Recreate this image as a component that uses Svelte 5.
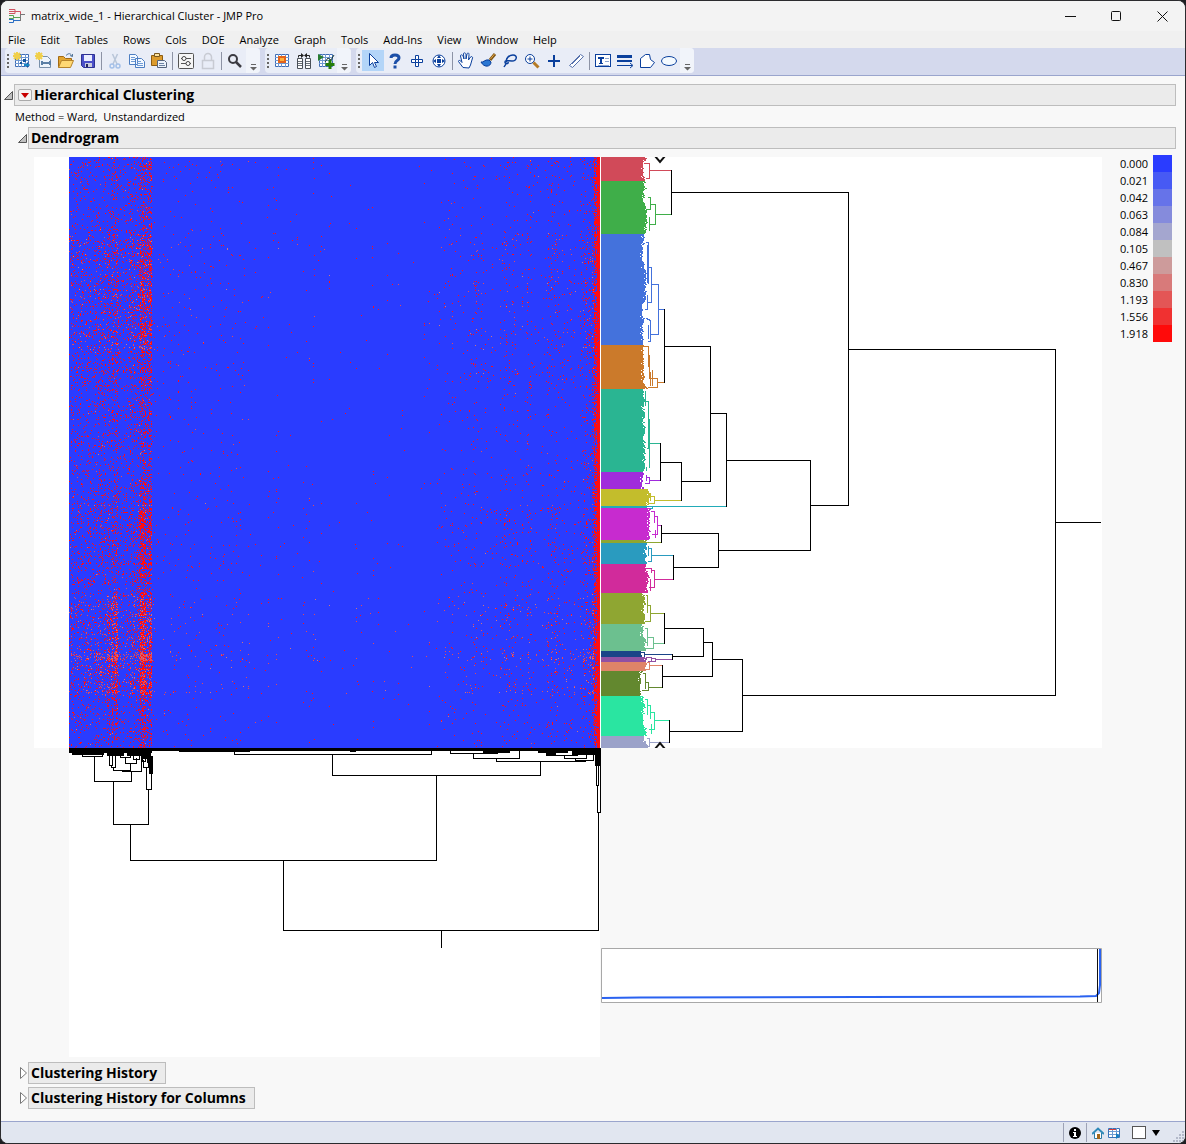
<script lang="ts">
  const menus = [
    "File", "Edit", "Tables", "Rows", "Cols", "DOE", "Analyze",
    "Graph", "Tools", "Add-Ins", "View", "Window", "Help",
  ];

  const toolbars = [
    ["new-table", "new-script", "open", "save", "|", "cut", "copy", "paste", "|", "prefs", "lock", "|", "search"],
    ["table", "columns", "add-graph"],
    ["arrow", "help", "move", "scroll", "|", "hand", "brush", "lasso", "zoom", "cross", "ruler", "|", "text", "line", "polygon", "oval"],
  ];

  const legend = [
    ["0.000", "#2a3cff"],
    ["0.021", "#475af4"],
    ["0.042", "#6673e9"],
    ["0.063", "#858bdc"],
    ["0.084", "#a4a6cf"],
    ["0.105", "#c0c0c0"],
    ["0.467", "#cd9b9b"],
    ["0.830", "#d87a7a"],
    ["1.193", "#e35656"],
    ["1.556", "#f03131"],
    ["1.918", "#ff0a0a"],
  ];

  // top, bottom and ragged edge of each row cluster, then its branches
  const clusters = [
    { color: "#d14a59", top: 157, bottom: 181, edge: 646, d: "M641 158H646M644 163H649V178H646M649 170H671" },
    { color: "#3fae49", top: 181, bottom: 234, edge: 646, d: "M648 197H650V209H648M650 204H655V224H649M649 217V230M655 214H671" },
    { color: "#4472dc", top: 234, bottom: 345, edge: 645, d: "M646 242H648V283M647 245V282M648 267H651V302H647M647 295V309H645M651 284H658V334H650M646 318L650 320V341H648M648 325V338M658 309H664" },
    { color: "#cb7a2b", top: 345, bottom: 389, edge: 646, d: "M640 346H648V366M649 355V378H657V387H648M650 372V385M652 370V385M657 382H664" },
    { color: "#2ab592", top: 389, bottom: 472, edge: 644, d: "M645 391V405M646 401H648V448M649 419V467M647 448H648M646 467V470M649 443H660" },
    { color: "#a02bdc", top: 472, bottom: 489, edge: 645, d: "M646 475V480M646 477H649V483H645M649 480H660" },
    { color: "#c3bd2c", top: 489, bottom: 506, edge: 649, d: "M648 493H650V500M650 496H654V503H648M654 500H681" },
    { color: "#22abb8", top: 506, bottom: 508, edge: 648, d: "M601 506H726M646 508H652V506" },
    { color: "#c72bcf", top: 508, bottom: 540, edge: 652, d: "M651 511H654V522M654 516H657V534H652M655 530V537M657 525H661" },
    { color: "#8ea631", top: 540, bottom: 543, edge: 647, d: "M601 542H661" },
    { color: "#2a9bbf", top: 543, bottom: 564, edge: 648, d: "M648 546V555M649 548H651V561H648M651 555H673" },
    { color: "#d12b9b", top: 564, bottom: 593, edge: 648, d: "M646 568H651V572M651 570H654V587H649M650 579V590M654 579H673" },
    { color: "#8fa632", top: 593, bottom: 624, edge: 644, d: "M646 595H647V612M648 605H650V621H645M650 613H664" },
    { color: "#6cc08f", top: 624, bottom: 651, edge: 645, d: "M645 628H647V645M647 637H653V648H646M653 643H664" },
    { color: "#1a4488", top: 651, bottom: 657, edge: 642, d: "M640 652H644V657H640M644 654H672" },
    { color: "#9150a3", top: 657, bottom: 662, edge: 649, d: "M648 657H651V660M651 658H655V661H648M655 659H672" },
    { color: "#df8468", top: 662, bottom: 671, edge: 647, d: "M647 662H649V669H645M649 665H662" },
    { color: "#63882f", top: 671, bottom: 696, edge: 643, d: "M643 673H645V688M645 682H648V690H642M648 687H662" },
    { color: "#2ae5a1", top: 696, bottom: 736, edge: 646, d: "M645 699H647V714M647 705H650V718M650 712H654V729H649M651 724V733M654 720H669" },
    { color: "#9ba2c9", top: 736, bottom: 748, edge: 647, d: "M647 738H649V746H646M649 742H669" },
  ];

  const rowTree =
    "M671 170V214M671 192H848M664 309V382M664 346H710M660 443V480M660 462H681M681 462V500M681 481H710" +
    "M710 346V481M710 413H726M726 413V506M726 460H810M661 525V542M661 533H718M673 555V579M673 567H718" +
    "M718 533V567M718 550H810M810 460V550M810 505H848M848 192V505M848 349H1055M664 613V643M664 628H703" +
    "M672 654V659M672 656H703M703 628V656M703 642H712M662 665V687M662 676H712M712 642V676M712 659H742" +
    "M669 720V742M669 731H742M742 659V731M742 695H1055M1055 349V695M1055 522H1102";

  const colTree =
    "M234 750V754H431V750M332 754V775H540V761M496 758V761H585M473 753V758H519V751M450 750V753H497" +
    "M546 752V755H577V752M564 755V758H586V752M575 758V760H593V752M596 764V785H598V764M597 785V812H600V750" +
    "M598 812V930M436 775V860M130 824V860H436M283 860V930H598M441 930V947M113 781V824H148V789" +
    "M94 757V781H131V771M82 754V756H102V753M122 771H141V755M130 763V771M113 767V770H130M111 765V767H115V756" +
    "M109 755V765H112V755M125 757V763H136V758M120 754V757H130V754M133 754V759H139V754M146 767V789H151V774" +
    "M143 760V767H148V758M142 753V761H145V754M147 758V762H149V752";

  const colMass =
    "M69 748H601V751H69ZM69 750H152V753H69ZM72 752H104V755H72ZM107 752H124V756H107ZM127 752H151V756H127Z" +
    "M142 756H152V759H142ZM149 756H153V774H149ZM179 750H250V752H179ZM350 750H356V752H350ZM483 750H510V753H483Z" +
    "M538 750H568V753H538ZM547 752H556V755H547ZM572 750H601V755H572ZM595 754H601V766H595Z";

  function seeded(seed: number) {
    let s = seed;
    return () => {
      s = (s + 0x6d2b79f5) | 0;
      let t = Math.imul(s ^ (s >>> 15), 1 | s);
      t = (t + Math.imul(t ^ (t >>> 7), 61 | t)) ^ t;
      return ((t ^ (t >>> 14)) >>> 0) / 4294967296;
    };
  }

  // how busy a column is, 69 to 600
  function colDensity(x: number, n: number) {
    if (x >= 597) return 0.97;
    if (x >= 594) return 0.6;
    if (x >= 592) return 0.22;
    if (x >= 583) return 0.08 * n + 0.02;
    if (x >= 500) return 0.004 + n * n * 0.07;
    if (x >= 440) return 0.002 + n * n * 0.04;
    if (x >= 250) return n > 0.9 ? 0.014 : 0.0015;
    if (x >= 152) return 0.002 + n * n * 0.022;
    if (x >= 149) return 0.45;
    if (x >= 140) return 0.2 + n * 0.25;
    if (x >= 128) return 0.08 + n * 0.1;
    if (x >= 107 && x < 118) return 0.1 + n * 0.18;
    return 0.05 + n * 0.1;
  }

  function rowFactor(y: number) {
    if (y < 181) return 0.8;
    if (y < 234) return 0.6;
    if (y < 345) return 1.15;
    if (y < 389) return 0.95;
    if (y < 472) return 0.65;
    if (y < 508) return 0.75;
    if (y < 565) return 1.1;
    if (y < 593) return 0.75;
    if (y < 696) return 1.3;
    return 0.7;
  }

  function buildHeat() {
    const rand = seeded(7);
    const noise: number[] = [];
    for (let x = 0; x < 531; x++) noise.push(rand());
    const paths = ["", "", ""];
    for (let y = 157; y < 748; y++) {
      const stripe = y === 505 || y === 349 || y === 347 || (y > 651 && y < 661) || y === 692;
      const pale = stripe ? 0.75 : y > 593 && y < 696 ? 0.35 : y > 233 && y < 350 ? 0.2 : 0.04;
      const jitter = 0.6 + rand() * 0.8;
      for (let x = 69; x < 600; x++) {
        let p = colDensity(x, noise[x - 69]);
        if (x < 594) p *= rowFactor(y) * jitter * (stripe ? 1.5 : 1);
        if (x > 106 && x < 118 && y > 593 && y < 740) p *= 1.8;
        if (x > 139 && x < 147 && y > 480) p *= 1.4;
        if (rand() > p) continue;
        const tone = rand() < pale && x < 594 ? (rand() < 0.2 ? 2 : 1) : 0;
        paths[tone] += `M${x} ${y}h1v1h-1z`;
      }
    }
    return paths;
  }

  // the leaves are too tight to tell apart, so they fill up to a wandering edge
  function buildEdge(top: number, bottom: number, edge: number) {
    const rand = seeded(top);
    let end = edge - 2;
    let d = "";
    for (let y = top; y < bottom; y++) {
      if (rand() < 0.5) end += rand() < 0.5 ? -1 : 1;
      end = Math.max(edge - 3, Math.min(edge + 1, end));
      if (rand() < 0.2) {
        d += `M601 ${y}H${end - 2}v1H601zM${end - 1} ${y}H${end + 1}v1H${end - 1}z`;
      } else {
        d += `M601 ${y}H${end}v1H601z`;
      }
    }
    return d;
  }

  const heat = buildHeat();
  const heatColors = ["#ff0e12", "#e64a58", "#d07480"];
</script>

{#snippet icon(name: string)}
  <svg width="18" height="18" viewBox="0 0 18 18" fill="none" stroke="#0a3f9c" aria-hidden="true">
    {#if name === "new-table" || name === "table" || name === "add-graph"}
      <path fill="#fff" stroke="#3f6db5" d="M2.5 2.5h13v12h-13z" />
      <path stroke="#6f98d2" d="M2 5.5h14M2 8.5h14M2 11.5h14M5.5 2v13M8.5 2v13M12.5 2v13" />
      {#if name === "new-table"}
        <path stroke="#f0cf4a" stroke-width="2" d="M4 0v8M0 4h8M1 1l6 6M7 1L1 7" />
        <path fill="#14559c" stroke="none" d="M10 7h3v3h-3zM7 10h2v2H7zM14 10l3 3-3 3z" />
        <path stroke="#1686c2" stroke-width="2" d="M11 13h5" />
      {:else if name === "table"}
        <path fill="#ffb13b" stroke="#e4631a" stroke-width="2" d="M6 5h6v5H6z" />
      {:else}
        <path stroke="#1d3d35" d="M8 10l3-4 3 2 3-5" />
        <path fill="#287d31" stroke="none" d="M1 2l6 3-6 4z" />
        <path stroke="#257d0a" stroke-width="3" d="M13 8v9M8.500 12.500h9" />
      {/if}
    {:else if name === "new-script"}
      <path fill="#eef4fb" stroke="#7890aa" d="M4.5 4.5h8l3 3v8h-11z" />
      <path stroke="#f0cf4a" stroke-width="2" d="M4 0v8M0 4h8M1 1l6 6M7 1L1 7" />
      <path stroke="#5b7fa5" stroke-width="2" d="M6 11h10M7 9v4M15 9v4" />
    {:else if name === "open"}
      <path fill="#e3a52f" stroke="#a36a14" d="M1.5 15.5v-11h5l2 2h6v3" />
      <path fill="#ffd873" stroke="#b5832a" d="M1.5 15.5l3-7h12l-3 7z" />
      <path stroke="#55779c" d="M9 3.5c3-3 5-2 6 1M13 3.5l2.5 1V2" />
    {:else if name === "save"}
      <path fill="#4b50c9" stroke="#2d3192" d="M2.5 2.5h13v13h-11l-2-2z" />
      <path fill="#e9edff" stroke="none" d="M5 3h8v6H5z" />
      <path fill="#c9ccdd" stroke="none" d="M6 11h7v4H6z" />
      <path fill="#26285f" stroke="none" d="M7 12h2v3H7z" />
    {:else if name === "cut"}
      <path stroke="#b9c6d8" stroke-width="1.5" d="M6.500 2l4.500 10M11.500 2L7 12" />
      <circle cx="6" cy="14" r="2" stroke="#a4c0e8" stroke-width="1.5" />
      <circle cx="12" cy="14" r="2" stroke="#a4c0e8" stroke-width="1.5" />
    {:else if name === "copy"}
      <path fill="#f4f9ff" stroke="#4d7ec2" d="M1.5 2.5h6l2 2v8h-8zM7.5 6.5h6l3 3v6h-9z" />
      <path stroke="#6f9bd6" d="M3 5.5h4M3 7.5h4M3 9.5h4M9 9.5h4M9 11.5h6M9 13.5h6" />
    {:else if name === "paste"}
      <path fill="#dc9b2c" stroke="#8d5d13" d="M1.5 3.5h11v10h-11z" />
      <path fill="#ffe39b" stroke="#79571f" d="M4.5 1.5h5v3h-5z" />
      <path fill="#edf3fb" stroke="#56647c" d="M7.5 8.5h7l2 2v5h-9z" />
      <path stroke="#6d83a3" d="M9 11.5h5M9 13.5h6" />
    {:else if name === "prefs"}
      <rect x="1.5" y="1.5" width="15" height="15" rx="1" fill="#f6f6f6" stroke="#555" />
      <path stroke="#555" d="M4 6.5h10M4 11.5h10" />
      <circle cx="7" cy="6.5" r="2" fill="#fff" stroke="#444" />
      <circle cx="11" cy="11.5" r="2" fill="#fff" stroke="#444" />
    {:else if name === "lock"}
      <path stroke="#c8cbd3" stroke-width="1.5" d="M3.5 8.5h11v8h-11zM5.5 8V5a3.5 3.5 0 0 1 7 0v3" />
    {:else if name === "search"}
      <circle cx="7" cy="7" r="4" stroke="#3b3b42" stroke-width="2" />
      <path stroke="#3b3b42" stroke-width="2.5" d="M10 10l5 5" />
    {:else if name === "columns"}
      <path fill="#fff" stroke="#4a5058" d="M2.5 6.5h5v10h-5zM10.5 6.5h5v10h-5z" />
      <path stroke="#6b737c" d="M3 9.5h4M3 11.5h4M3 13.5h4M11 9.5h4M11 11.5h4M11 13.5h4" />
      <path stroke="#222" d="M3.5 5.500v-2h3M14.500 5.500v-2h-3" />
      <path fill="#222" stroke="none" d="M6 1l3 2.500L6 6zM12 1L9 3.500 12 6z" />
    {:else if name === "arrow"}
      <path fill="#fff" d="M5.5 1.5v12l3-3 2 5 2-1-2-4h4z" />
    {:else if name === "help"}
      <path stroke="#1c4fa8" stroke-width="3" d="M5 6c0-4 8-4 8 0 0 3-4 2-4 6M9 13.5v3" />
    {:else if name === "move"}
      <path fill="#fff" d="M7.5 3.5h3v4h4v3h-4v4h-3v-4h-4v-3h4z" />
      <path d="M7.5 7.5h3v3h-3z" />
    {:else if name === "scroll"}
      <circle cx="9" cy="9" r="6" fill="#fff" />
      <path fill="#0a3f9c" stroke="none" d="M9 3l2 3H7zM9 15l2-3H7zM3 9l3-2v4zM15 9l-3-2v4zM7 7h4v4H7z" />
    {:else if name === "hand"}
      <path fill="#fff" d="M6 15.5L1.5 9.5c0-2 2-1 3.5 1L3.500 4c0-2 2-1 2.500 0l1 3-.5-5c0-2 2-1 2.500 0v5l1-5c1-2 2-1 2 1l-.5 5 2-3c1-1 2.500 0 2 1l-2 7-1.500 3z" />
    {:else if name === "brush"}
      <path stroke="#7d5618" stroke-width="3" d="M16 2l-5 6" />
      <path stroke="#e5a544" d="M15.500 2l-4 5" />
      <path fill="#2b77d3" d="M2 10c2 1 4-3 8-2l2 2c0 5-7 6-10 0z" />
    {:else if name === "lasso"}
      <path stroke-width="1.500" d="M6 10c-2-3 2-7 6-7 5 0 4 6-1 6-4 0-7-1-7 1s4 2 3 0M5 11c0 2-1 2-2 4" />
    {:else if name === "zoom"}
      <circle cx="7" cy="7" r="4.500" fill="#fff" />
      <path stroke="#b57b26" stroke-width="3" d="M10.500 10.500l5 5" />
      <path d="M4.500 7h5M7 4.500v5" />
    {:else if name === "cross"}
      <path stroke-width="2" d="M9 3v12M3 9h12" />
    {:else if name === "ruler"}
      <path fill="#fff" stroke="#5772ad" d="M2.500 13.500l11-11 3 2-11 11zM5 12l8-8" />
    {:else if name === "text"}
      <rect x="1.500" y="2.500" width="15" height="12" fill="#fff" />
      <path stroke-width="2" d="M4 6h6M7 6v6" />
      <path d="M5 11.500h4" />
      <path stroke="#8ba4cf" d="M11 6.500h4M11 9.500h4M4 13.500h11" />
    {:else if name === "line"}
      <path stroke-width="3" d="M1 4.500h15" />
      <path stroke-width="2" d="M1 9h15" />
      <path d="M1 13.500h15M14 11l3 2.500-3 2.500" />
    {:else if name === "polygon"}
      <path fill="#fff" d="M2.500 15.500v-9l5-4h4l1 5 4 3-4 5z" />
    {:else if name === "oval"}
      <ellipse cx="9" cy="9" rx="7.500" ry="4.500" fill="#f4faff" />
    {/if}
  </svg>
{/snippet}

<div class="window">
  <header class="titlebar">
    <svg class="logo" width="17" height="14" viewBox="0 0 17 14" fill="none" aria-hidden="true">
      <path stroke="#cf5361" d="M0 .5h6v4H0M0 2.500h6M6 2.500h5.500v3" />
      <path stroke="#5aa352" d="M0 6.500h4.500v3H0M4 8.500h7" />
      <path stroke="#2b6fc4" d="M0 10.500h4.500v3H0M4 11.500h7" />
      <path stroke="#777" d="M11.500 5v7M12 5.500h4" />
    </svg>
    <span class="title">matrix_wide_1 - Hierarchical Cluster - JMP Pro</span>
    <div class="controls">
      <button aria-label="Minimize"><svg width="11" height="11" stroke="#111" fill="none"><path d="M0 5.500h11" /></svg></button>
      <button aria-label="Maximize"><svg width="11" height="11" stroke="#111" fill="none"><rect x=".5" y=".5" width="9" height="9" rx="1" /></svg></button>
      <button aria-label="Close"><svg width="11" height="11" stroke="#111" fill="none"><path d="M.5.5l10 10M10.500.5l-10 10" /></svg></button>
    </div>
  </header>

  <nav class="menubar">
    {#each menus as menu}
      <button>{menu}</button>
    {/each}
  </nav>

  <div class="toolbars">
    {#each toolbars as tools}
      <div class="toolbar" role="toolbar">
        <span class="grip"></span>
        {#each tools as tool}
          {#if tool === "|"}
            <span class="sep"></span>
          {:else}
            <button class="tool" class:active={tool === "arrow"} aria-label={tool}>{@render icon(tool)}</button>
          {/if}
        {/each}
        <button class="overflow" aria-label="More tools">
          <svg width="7" height="7"><path fill="#666" d="M1 0h5v1H1zM0 3h7L3.500 6.500z" /></svg>
        </button>
      </div>
    {/each}
  </div>

  <main>
    <section class="outline">
      <button class="disclose" aria-label="Collapse Hierarchical Clustering">
        <svg width="9" height="9"><path fill="#c0c0c0" stroke="#555" d="M8.500 .5v8h-8z" /></svg>
      </button>
      <h1>
        <button class="hotspot" aria-label="Hierarchical Clustering options">
          <svg width="8" height="5"><path fill="#c80000" d="M0 0h8L4 5z" /></svg>
        </button>
        Hierarchical Clustering
      </h1>
    </section>
    <p class="method">Method = Ward,&nbsp; Unstandardized</p>

    <section class="outline nested">
      <button class="disclose" aria-label="Collapse Dendrogram">
        <svg width="9" height="9"><path fill="#c0c0c0" stroke="#555" d="M8.500 .5v8h-8z" /></svg>
      </button>
      <h2>Dendrogram</h2>
    </section>

    <div class="report">
      <div class="plots">
        <div class="row-plot">
          <svg width="1032" height="591" viewBox="69 157 1032 591" shape-rendering="crispEdges" role="img" aria-label="Heat map and row dendrogram">
            <rect x="69" y="157" width="531" height="591" fill="#2a3cff" />
            {#each heat as d, i}
              <path {d} fill={heatColors[i]} />
            {/each}
            {#each clusters as c}
              <path d={buildEdge(c.top, c.bottom, c.edge)} fill={c.color} />
              <path d={c.d} fill="none" stroke={c.color} stroke-linecap="square" transform="translate(.5 .5)" />
            {/each}
            <path d={rowTree} fill="none" stroke="#000" stroke-linecap="square" transform="translate(.5 .5)" />
            <path d="M655 156l5 6 5-6M655 749l5-6 5 6" fill="none" stroke="#111" stroke-width="2" shape-rendering="auto" />
          </svg>
        </div>
        <div class="col-plot">
          <svg class="col-tree" width="532" height="309" viewBox="69 748 532 309" shape-rendering="crispEdges" role="img" aria-label="Column dendrogram">
            <rect x="69" y="748" width="531" height="309" fill="#fff" />
            <path d={colMass} />
            <path d={colTree} fill="none" stroke="#000" stroke-linecap="square" transform="translate(.5 .5)" />
          </svg>
          <svg class="scree" width="501" height="55" viewBox="601 948 501 55" role="img" aria-label="Distance plot">
            <path d="M601.500 948.500h500v54h-500z" fill="#fff" stroke="#a8a8a8" />
            <path d="M602 998L640 997.500 860 997 1080 996.500 1096 996 1099 993 1100 985V949" fill="none" stroke="#2a62f0" stroke-width="2" />
            <path d="M1097.500 949v53" stroke="#111" />
          </svg>
        </div>
      </div>

      <table class="legend">
        <tbody>
          {#each legend as [value, color]}
            <tr>
              <td>{value}</td>
              <td class="swatch" style:background={color}></td>
            </tr>
          {/each}
        </tbody>
      </table>
    </div>

    {#each ["Clustering History", "Clustering History for Columns"] as label}
      <section class="outline nested closed">
        <button class="disclose" aria-label="Expand {label}">
          <svg width="9" height="12"><path fill="#fff" stroke="#777" d="M2.500 .5v11l6-5.500z" /></svg>
        </button>
        <h2>{label}</h2>
      </section>
    {/each}
  </main>

  <footer>
    <button class="cell" aria-label="Information">
      <svg width="12" height="12"><circle cx="6" cy="6" r="6" /><path fill="#fff" d="M5 2h2v2H5zM4 5h3v4h1v1H4V9h1V6H4z" /></svg>
    </button>
    <div class="cell links">
      <button aria-label="Home window">
        <svg width="12" height="12"><path fill="#fff" stroke="#2b7ba5" d="M2.500 6v5.500h7V6" /><path fill="none" stroke="#2d89b8" stroke-width="2" d="M0 7l6-5.500L12 7" /><path fill="#a36618" d="M5 7h3v5H5z" /></svg>
      </button>
      <button aria-label="Data table">
        <svg width="12" height="12"><path fill="#fff" stroke="#3a74b8" d="M.5 1.500h11v9H.5z" /><path stroke="#6c9bd2" d="M1 4.500h10M1 7.500h10M4.500 1v9M8.500 1v9" /><path stroke="#d33c3c" d="M1 2.500h7" /><path fill="#1a7fc0" d="M8 6l4 3-4 3z" /></svg>
      </button>
      <input type="checkbox" aria-label="Select window" />
      <button aria-label="Window list">
        <svg width="8" height="6"><path d="M0 0h8L4 6z" /></svg>
      </button>
    </div>
    <svg class="size-grip" width="12" height="12" fill="#b3b9c9" aria-hidden="true">
      <path d="M9 0h2v2H9zM6 3h2v2H6zM9 3h2v2H9zM3 6h2v2H3zM6 6h2v2H6zM9 6h2v2H9zM0 9h2v2H0zM3 9h2v2H3zM6 9h2v2H6zM9 9h2v2H9z" />
    </svg>
  </footer>
</div>

<style>
  :global(body) {
    background: #1e1e22;
  }

  .window {
    box-sizing: border-box;
    display: flex;
    flex-direction: column;
    min-height: 100vh;
    overflow: hidden;
    border: 1px solid #2b2b2e;
    border-radius: 8px;
    background: #f8f8f8;
    color: #000;
    font: 11px/16px "Open Sans", "Noto Sans", sans-serif;
  }

  button {
    display: flex;
    align-items: center;
    justify-content: center;
    margin: 0;
    padding: 0;
    border: 0;
    background: none;
    color: inherit;
    font: inherit;
  }

  svg {
    display: block;
    flex-shrink: 0;
  }

  .titlebar {
    display: flex;
    align-items: center;
    height: 30px;
    padding-left: 8px;
    background: #f3f3f3;
  }

  .title {
    margin-left: 5px;
  }

  .controls {
    display: flex;
    align-self: stretch;
    margin-left: auto;
  }

  .controls button {
    width: 46px;
  }

  .menubar {
    display: flex;
    height: 17px;
    background: #f0f0f0;
  }

  .menubar button {
    padding: 0 8px 0 7px;
  }

  .toolbars {
    display: flex;
    gap: 5px;
    height: 27px;
    padding: 0 4px;
    border-bottom: 1px solid #9aa5cd;
    background: #d4d9ed;
  }

  .toolbar {
    display: flex;
    align-items: center;
    height: 25px;
    border-radius: 4px;
    background: #e9edf7;
  }

  .grip {
    width: 2px;
    height: 14px;
    margin: 0 2px;
    background: repeating-linear-gradient(#666 0 2px, transparent 2px 4px);
  }

  .tool {
    width: 22px;
    height: 21px;
  }

  .tool.active {
    background: #b3d5f8;
  }

  .sep {
    width: 1px;
    height: 18px;
    margin: 0 2px;
    background: #8d93a5;
  }

  .overflow {
    align-self: stretch;
    align-items: flex-end;
    width: 14px;
    padding-bottom: 2px;
    border-radius: 0 4px 4px 0;
    background: #f1f4fa;
  }

  main {
    flex: 1;
    padding: 8px 9px 0 3px;
  }

  .outline {
    display: flex;
    align-items: center;
  }

  .nested {
    padding-left: 14px;
  }

  .disclose {
    width: 10px;
    height: 22px;
    justify-content: flex-start;
  }

  h1,
  h2 {
    display: flex;
    align-items: center;
    flex: 1;
    box-sizing: border-box;
    height: 22px;
    margin: 0;
    padding: 0 2px;
    border: 1px solid #bdbdbd;
    background: #ebebeb;
    font-size: 14px;
    font-weight: 700;
    line-height: 20px;
  }

  .hotspot {
    width: 14px;
    height: 12px;
    margin: 0 2px 0 1px;
    border: 1px solid #aaa;
    border-radius: 2px;
    background: #f5f5f5;
  }

  .method {
    margin: 3px 0 2px 11px;
  }

  .report {
    display: flex;
    justify-content: space-between;
    align-items: flex-start;
    padding: 6px 4px 5px 30px;
  }

  .plots {
    padding-top: 2px;
  }

  .row-plot {
    padding-left: 35px;
    background: #fff;
  }

  .col-plot {
    display: flex;
    padding-left: 35px;
  }

  .scree {
    margin-top: 200px;
  }

  .legend {
    border-collapse: collapse;
  }

  .legend td {
    height: 17px;
    padding: 0 5px 0 0;
    line-height: 17px;
    text-align: right;
  }

  .legend .swatch {
    width: 19px;
    padding: 0;
  }

  .closed {
    margin-bottom: 3px;
  }

  .closed h2 {
    flex: none;
    padding-right: 8px;
  }

  footer {
    display: flex;
    align-items: center;
    justify-content: flex-end;
    height: 21px;
    border-top: 1px solid #9aa5cd;
    background: #e1e6f0;
  }

  .cell {
    display: flex;
    align-items: center;
    height: 19px;
    padding: 0 5px;
    border-left: 1px solid #9da2b5;
  }

  .links {
    gap: 4px;
  }

  .links input {
    appearance: none;
    width: 14px;
    height: 13px;
    margin: 0 2px 0 8px;
    border: 1px solid #555;
    background: #fff;
  }

  .size-grip {
    align-self: flex-end;
    margin-left: 8px;
  }
</style>
